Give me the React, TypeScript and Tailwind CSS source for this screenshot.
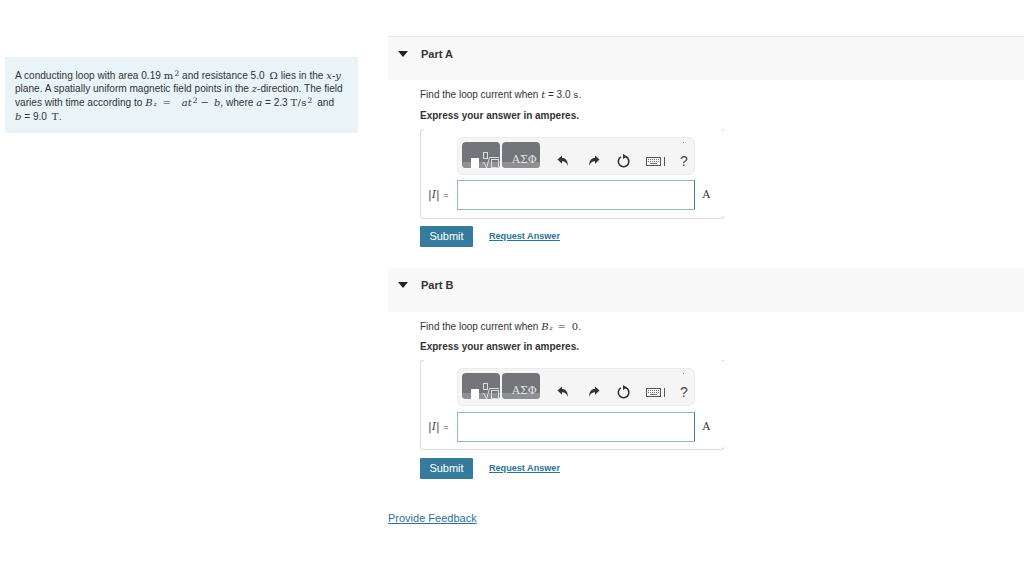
const sans = "font-['Liberation_Sans',Arial,sans-serif]";
const mathFont = "font-['DejaVu_Serif','Liberation_Serif',serif]";

function M({ children, className = "" }: { children: React.ReactNode; className?: string }) {
  return <span className={`${mathFont} text-[10px] tracking-[0.3px] ${className}`}>{children}</span>;
}

function Mi({ children, className = "" }: { children: React.ReactNode; className?: string }) {
  return <span className={`${mathFont} italic text-[10px] ${className}`}>{children}</span>;
}

function Sup({ children }: { children: React.ReactNode }) {
  return <span className={`${mathFont} inline-block align-top text-[7.5px] leading-[9px] ml-[1px]`}>{children}</span>;
}

function Bz() {
  return (
    <>
      <Mi>B</Mi>
      <span className={`${mathFont} italic text-[6px] ml-[1px]`}>z</span>
    </>
  );
}

function ArrowIcon({ flip }: { flip?: boolean }) {
  return (
    <svg width="12" height="12" viewBox="0 0 12 12" className={flip ? "-scale-x-100" : ""}>
      <path d="M0.5 4.5 L5 0.5 V3 C8.5 3 11 5.5 10.8 11 C10 8 8 6.3 5 6.3 V8.8 Z" fill="#333" />
    </svg>
  );
}

function ResetIcon() {
  return (
    <svg width="14" height="14" viewBox="0 0 14 14" fill="none">
      <path d="M8.6 2.6 A5.3 5.3 0 1 1 4 2.9" stroke="#333" strokeWidth="1.6" />
      <path d="M6 0 L10 2.6 L6 5 Z" fill="#333" />
    </svg>
  );
}

function KeyboardIcon() {
  return (
    <svg width="15" height="9" viewBox="0 0 15 9" fill="none">
      <rect x="0.5" y="0.5" width="14" height="8" stroke="#555" />
      <path d="M2 2.5 H13 M2 4.5 H13" stroke="#777" strokeWidth="1" strokeDasharray="1 1" />
      <path d="M4 6.5 H11" stroke="#777" />
    </svg>
  );
}

function TemplateButton() {
  return (
    <div className="relative w-[38px] h-[26px] rounded-[4px] bg-[#73757a] overflow-hidden">
      <div className="absolute left-0 right-0 bottom-0 h-[6px] bg-[#8f9094]" />
      <div className="absolute left-[9px] bottom-0 w-[8px] h-[10px] bg-white" />
      <svg width="18" height="17" viewBox="0 0 18 17" fill="none" className="absolute left-[20px] top-[9px]">
        <rect x="1.5" y="1.5" width="4" height="6" stroke="#ddd" />
        <path d="M0.5 12 L2 11.5 L4.5 17 L7.5 6.5 H17" stroke="#ddd" />
        <rect x="9.5" y="8.5" width="7" height="8" stroke="#ddd" />
      </svg>
    </div>
  );
}

function GreekButton() {
  return (
    <div className="relative w-[38px] h-[26px] rounded-[4px] bg-[#73757a] overflow-hidden">
      <div className="absolute left-0 right-0 bottom-0 h-[6px] bg-[#8f9094]" />
      <span className={`absolute left-[10px] top-[10px] leading-[16px] text-[11px] text-[#e4e4e4] ${mathFont}`}>ΑΣΦ</span>
    </div>
  );
}

function AnswerBox({ tall }: { tall?: boolean }) {
  return (
    <div className="relative ml-[32px] mt-[6px] w-[304px] h-[90px] border-l border-b border-[#dcdcdc] rounded-[4px] flex flex-col items-start pl-[36px]">
      <span className="absolute -left-px top-0 w-[4px] h-[3px] border-l border-t border-[#dcdcdc] rounded-tl-[4px]" />
      <span className="absolute right-0 top-0 w-[3px] h-[2px] border-r border-t border-[#e4e4e4]" />
      <span className="absolute right-0 -bottom-px w-[3px] h-[3px] border-r border-b border-[#dcdcdc] rounded-br-[4px]" />
      <div className="relative w-[238px] h-[38px] mt-[8px] bg-[#f5f5f5] border border-[#ebebeb] rounded-[6px] flex items-center pl-[4px]">
        <span className="absolute right-[10px] top-[4px] w-px h-px bg-[#888]" />
        <div className="flex gap-[2px] -mt-[2px]">
          <TemplateButton />
          <GreekButton />
        </div>
        <div className="ml-[17px] mt-[10px] flex items-center">
          <ArrowIcon />
          <div className="ml-[19px]"><ArrowIcon flip /></div>
          <div className="ml-[17px]"><ResetIcon /></div>
          <div className="ml-[15px] flex items-center gap-[3px]">
            <KeyboardIcon />
            <span className="w-px h-[9px] bg-[#555]" />
          </div>
          <span className={`ml-[15px] text-[14px] leading-none text-[#444] ${sans}`}>?</span>
        </div>
      </div>
      <div className={`relative ${tall ? "mt-[6px]" : "mt-[5px]"} w-[238px] h-[30px] border border-[#8fb8cb] border-r-[#3d7d9e] bg-white`}>
        <span className={`absolute -left-[30px] top-[7px] text-[11px] leading-[14px] text-[#444] whitespace-nowrap ${mathFont}`}>
          |<i>I</i>| <span className={`${sans} text-[9px]`}>=</span>
        </span>
        <span className={`absolute -right-[16px] top-[6px] text-[10.5px] leading-[14px] text-[#333] ${mathFont}`}>A</span>
      </div>
    </div>
  );
}

function Part({ name, tall, children }: { name: string; tall?: boolean; children: React.ReactNode }) {
  return (
    <section>
      <div className={`${tall ? "h-[44px]" : "h-[43px]"} bg-[#f9f9f9] flex items-start pt-[10px]`}>
        <svg width="10" height="6" viewBox="0 0 10 6" className="ml-[10px] mt-[4px]">
          <path d="M0 0 H10 L5 6 Z" fill="#222" />
        </svg>
        <span className="ml-[13px] text-[11px] leading-[14px] font-bold text-[#333]">{name}</span>
      </div>
      <div className="pt-[8px] pl-[32px] text-[10px] leading-[14px] text-[#333]">{children}</div>
      <AnswerBox tall={tall} />
      <div className={`ml-[32px] ${tall ? "mt-[8px]" : "mt-[7px]"} flex items-center`}>
        <button className="w-[53px] h-[21px] bg-[#367a9c] text-white text-[11px] rounded-[1px]">Submit</button>
        <a className="ml-[16px] text-[9.1px] font-bold text-[#2c7199] underline">Request Answer</a>
      </div>
    </section>
  );
}

export default function App() {
  return (
    <div className={`w-[1024px] h-[565px] bg-white flex overflow-hidden ${sans}`}>
      <aside className="w-[353px] ml-[5px] mt-[57px] h-[76px] bg-[#e8f4f7] pl-[10px] pt-[12px] text-[10.1px] leading-[13.4px] text-[#333] shrink-0">
        A conducting loop with area 0.19 <M>m</M><Sup>2</Sup> and resistance 5.0 <M className="ml-[2px]">Ω</M> lies in the <Mi>x</Mi>-<Mi>y</Mi>
        <br />
        plane. A spatially uniform magnetic field points in the <Mi>z</Mi>-direction. The field
        <br />
        varies with time according to <Bz /> <M className="ml-[3px]">=</M>&nbsp;&nbsp;<Mi className="ml-[5px]">at</Mi><Sup>2</Sup> <M>−</M> <Mi className="ml-[2px]">b</Mi>, where <Mi>a</Mi> = 2.3 <M>T/s</M><Sup>2</Sup> <span className="ml-[2px]">and</span>
        <br />
        <Mi>b</Mi> = 9.0 <M className="ml-[2px]">T</M>.
      </aside>
      <main className="ml-[30px] mt-[36px] flex-1">
        <div className="border-t border-[#e4e4e4]">
          <Part name="Part A">
            <p>Find the loop current when <Mi>t</Mi> = 3.0 <M>s</M>.</p>
            <p className="mt-[7px] font-bold">Express your answer in amperes.</p>
          </Part>
        </div>
        <div className="mt-[21px]">
          <Part name="Part B" tall>
            <p>Find the loop current when <Bz /> <M className="ml-[2px]">=</M>&nbsp;&nbsp;<M>0</M>.</p>
            <p className="mt-[5px] font-bold">Express your answer in amperes.</p>
          </Part>
        </div>
        <a className="block mt-[31px] text-[11px] text-[#2c7199] underline">Provide Feedback</a>
      </main>
    </div>
  );
}
